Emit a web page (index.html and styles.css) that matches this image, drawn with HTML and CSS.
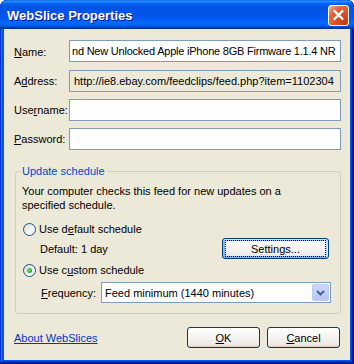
FILE: index.html
```html
<!DOCTYPE html>
<html>
<head>
<meta charset="utf-8">
<link rel="stylesheet" href="styles.css">
</head>
<body>
<div class="window">
  <div class="titlebar">
    <span class="title">WebSlice Properties</span>
    <button class="close" aria-label="Close">
      <svg width="20" height="20" viewBox="0 0 20 20"><path d="M6 6 L14 14 M14 6 L6 14" stroke="#fff" stroke-width="2.4" stroke-linecap="square" fill="none"/></svg>
    </button>
  </div>
  <div class="client">
    <div class="fields">
      <span class="lbl"><u>N</u>ame:</span>
      <div class="box box-name"><span>nd New Unlocked Apple iPhone 8GB Firmware 1.1.4 NR</span></div>
      <span class="lbl">A<u>d</u>dress:</span>
      <div class="box box-disabled"><span>http://ie8.ebay.com/feedclips/feed.php?item=1102304</span></div>
      <span class="lbl">Use<u>r</u>name:</span>
      <div class="box"></div>
      <span class="lbl"><u>P</u>assword:</span>
      <div class="box"></div>
    </div>
    <fieldset class="group">
      <legend>Update schedule</legend>
      <p class="desc">Your computer checks this feed for new updates on a<br>specified schedule.</p>
      <div class="radio-row"><span class="radio"></span><span>Use d<u>e</u>fault schedule</span></div>
      <div class="default-row">
        <span>Default: 1 day</span>
        <button class="btn btn-settings"><span class="focus-ring">Settin<u>g</u>s...</span></button>
      </div>
      <div class="radio-row radio-row2"><span class="radio checked"></span><span>Use c<u>u</u>stom schedule</span></div>
      <div class="freq-row">
        <span class="freq-lbl"><u>F</u>requency:</span>
        <div class="select">
          <span class="select-text">Feed minimum (1440 minutes)</span>
          <span class="drop"><svg width="9" height="6" viewBox="0 0 9 6"><path d="M1 1 L4.5 4.5 L8 1" stroke="#4D6185" stroke-width="2" fill="none"/></svg></span>
        </div>
      </div>
    </fieldset>
    <div class="footer">
      <a href="#" class="link">About WebSlices</a>
      <div class="actions">
        <button class="btn"><u>O</u>K</button>
        <button class="btn"><u>C</u>ancel</button>
      </div>
    </div>
  </div>
</div>
</body>
</html>
```
FILE: styles.css
```css
* { box-sizing: border-box; }
html, body { margin: 0; padding: 0; background: #fff; }
body { font-family: "Liberation Sans", Arial, sans-serif; font-size: 11px; color: #000; }

.window {
  width: 354px;
  height: 364px;
  display: flex;
  flex-direction: column;
  border-radius: 7px 7px 0 0;
  background: #0055EA;
  box-shadow: inset -1px -1px #00138C, inset 1px 1px #0831D9, inset -2px -2px #001EA0, inset 2px 2px #166AEE, inset -3px -3px #003BDA, inset 3px 3px #0855DD;
  overflow: hidden;
}

.titlebar {
  height: 29px;
  flex: none;
  display: flex;
  align-items: center;
  padding: 0 7px 0 7px;
  border-radius: 7px 7px 0 0;
  background: linear-gradient(180deg, #0058EE 0%, #3593FF 4%, #288EFF 6%, #127DFF 8%, #036FFC 10%, #0262EE 14%, #0057E5 20%, #0054E3 24%, #0055EB 56%, #005BF5 66%, #026AFE 76%, #0062EF 86%, #0052D6 92%, #0040AB 94%, #003092 100%);
}
.title {
  flex: 1;
  color: #fff;
  font-weight: bold;
  font-size: 13px;
  text-shadow: 1px 1px #0F1089;
  padding-top: 1px;
}
.close {
  width: 21px;
  height: 21px;
  padding: 0;
  margin: 1px -2px 0 0;
  border: 1px solid #fff;
  border-radius: 3px;
  display: flex;
  align-items: center;
  justify-content: center;
  background: radial-gradient(circle at 85% 85%, #C33C12 0%, #DA532A 45%, #E26840 70%, #F2A48A 92%, #fff 100%);
}
.close svg { display: block; }

.client {
  flex: 1;
  margin: 0 4px 4px 4px;
  background: #ECE9D8;
  padding: 11px 10px 0 10px;
  display: flex;
  flex-direction: column;
}

.fields {
  display: grid;
  grid-template-columns: 55px 272px;
  row-gap: 7px;
  align-items: center;
}
.lbl { white-space: nowrap; }
.box {
  height: 22px;
  border: 1px solid #7F9DB9;
  background: #fff;
  overflow: hidden;
  white-space: nowrap;
  display: flex;
  align-items: center;
  padding: 0 4px;
}
.box-name { padding: 0 6px 0 2px; margin-bottom: 1px; }
.box-name span { flex: none; letter-spacing: -0.22px; }
.box-disabled { background: #ECE9D8; }
.box-disabled span { flex: none; }

.group {
  margin: 15px 0 0 1px;
  width: 326px;
  padding: 0 10px 10px 6px;
  border: 1px solid #D0D0BF;
  border-radius: 3px;
  min-width: 0;
}
.group legend {
  color: #0046D5;
  padding: 0 2px;
  margin-left: -2px;
  line-height: 13px;
}
.desc {
  margin: 6px 0 0 0;
  line-height: 14px;
}
.radio-row {
  margin-top: 10px;
  height: 14px;
  display: flex;
  align-items: center;
  padding-left: 1px;
  gap: 3px;
}
.radio-row2 { margin-top: 4px; }
.radio {
  width: 13px;
  height: 13px;
  border-radius: 50%;
  border: 1px solid #1C5180;
  background: linear-gradient(135deg, #DCDCD7 0%, #F4F4F0 60%, #fff 100%);
  display: flex;
  align-items: center;
  justify-content: center;
  flex: none;
}
.radio.checked::after {
  content: "";
  width: 5px;
  height: 5px;
  border-radius: 50%;
  background: radial-gradient(circle at 40% 40%, #79E57E 0%, #21A121 70%, #1A8E1A 100%);
}
.default-row {
  margin-top: 2px;
  display: flex;
  align-items: center;
  padding-left: 18px;
}

.btn {
  font-family: inherit;
  font-size: 11px;
  color: #000;
  height: 21px;
  width: 73px;
  padding: 0;
  border: 1px solid #003C74;
  border-radius: 3px;
  background: linear-gradient(180deg, #fff 0%, #ECEBE6 86%, #D6D0C5 100%);
  display: flex;
  align-items: center;
  justify-content: center;
}
.btn-settings {
  margin-left: auto;
  margin-right: 1px;
  width: 107px;
  box-shadow: inset -1px 1px #CEE7FF, inset 1px 2px #98B8EA, inset -2px 2px #BCD4F6, inset 1px -1px #89ADE4, inset 2px -2px #89ADE4;
}
.focus-ring {
  display: flex;
  align-items: center;
  justify-content: center;
  width: 99px;
  height: 15px;
  outline: 1px dotted #000;
}

.freq-row {
  margin-top: 5px;
  display: flex;
  align-items: center;
  padding-left: 19px;
}
.freq-lbl { width: 60px; flex: none; }
.select {
  flex: 1;
  margin-right: -1px;
  height: 21px;
  border: 1px solid #7F9DB9;
  background: #fff;
  display: flex;
  align-items: center;
  padding: 1px 1px 1px 3px;
}
.select-text { flex: 1; }
.drop {
  width: 17px;
  height: 100%;
  border: 1px solid #B9CAF3;
  border-radius: 2px;
  background: linear-gradient(180deg, #C8D9FC 0%, #B4C8F6 100%);
  display: flex;
  align-items: center;
  justify-content: center;
}
.drop svg { display: block; }

.footer {
  margin-top: 13px;
  display: flex;
  align-items: center;
}
.link { color: #0033CC; text-decoration: underline; }
.actions {
  margin-left: auto;
  display: flex;
  gap: 7px;
}
u { text-decoration: underline; }
```
